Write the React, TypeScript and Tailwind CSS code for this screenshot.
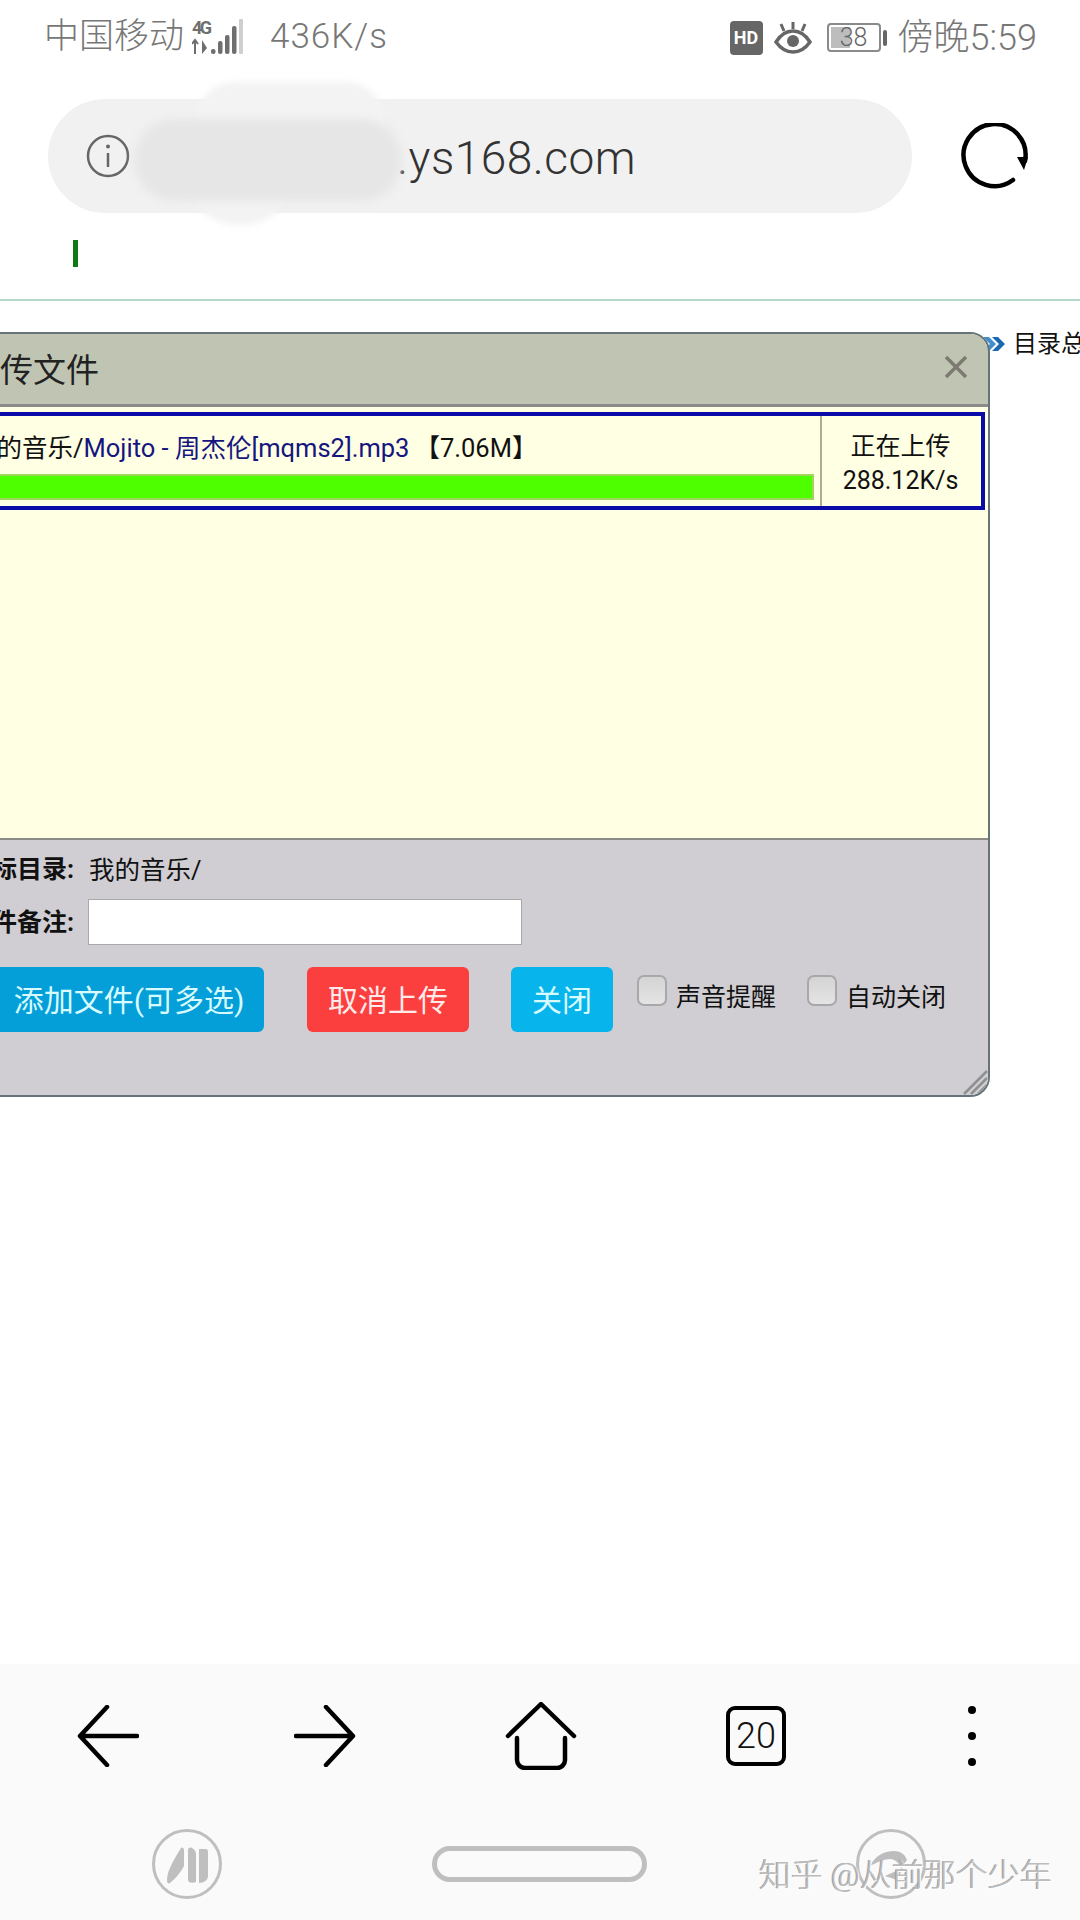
import React from "react";

function SignalIcon() {
  return (
    <svg width="54" height="38" viewBox="0 0 54 38" className="text-[#6f6f6f]">
      <text x="0" y="15" fontSize="18" fontWeight="700" fontFamily="Roboto, sans-serif" fill="currentColor" textLength="20">
        4G
      </text>
      <path d="M3 35V21M0 25l3-4 3 4" fill="none" stroke="currentColor" strokeWidth="2" />
      <path d="M10 21v14l5-6z" fill="currentColor" />
      <rect x="19" y="30" width="4.5" height="5" rx="2" fill="currentColor" />
      <rect x="26" y="22" width="4.5" height="13" rx="2" fill="currentColor" />
      <rect x="33" y="16" width="4.5" height="19" rx="2" fill="currentColor" />
      <rect x="40" y="7" width="4.5" height="28" rx="2" fill="currentColor" />
      <rect x="47" y="0" width="4" height="35" rx="1" fill="#cfcfcf" />
    </svg>
  );
}

function StatusBar() {
  return (
    <div className="h-[74px] pt-[1px] flex items-center justify-between pl-[44px] pr-[43px] text-[#777777] text-[35px] font-light">
      <div className="flex items-center">
        <span>中国移动</span>
        <span className="ml-[8px]">
          <SignalIcon />
        </span>
        <span className="ml-[24px] tracking-[1px]">436K/s</span>
      </div>
      <div className="flex items-center">
        <div className="w-[33px] h-[34px] rounded-[4px] bg-[#666666] text-white text-[18px] font-bold flex items-center justify-center">
          HD
        </div>
        <svg width="38" height="34" viewBox="0 0 38 34" className="ml-[11px]">
          <path d="M2 21c5-8 10-11 17-11s12 3 17 11c-5 7-10 10-17 10S7 28 2 21z" fill="none" stroke="#666666" strokeWidth="3.5" />
          <circle cx="19" cy="20" r="6" fill="#666666" />
          <path d="M19 1v7M7 3l3 7M31 3l-3 7" stroke="#666666" strokeWidth="3" />
        </svg>
        <div className="ml-[15px] flex items-center">
          <div className="relative w-[54px] h-[29px] rounded-[4px] border-2 border-[#8a8a8a] flex items-center justify-center text-[25px] leading-none text-[#666666] overflow-hidden">
            <div className="absolute left-[2px] top-[2px] bottom-[2px] w-[19px] bg-[#bdbdbd]"></div>
            <span className="relative">38</span>
          </div>
          <div className="ml-[2px] w-[4px] h-[16px] rounded-[2px] bg-[#666666]"></div>
        </div>
        <span className="ml-[11px] text-[36px]">傍晚5:59</span>
      </div>
    </div>
  );
}

function UrlRow() {
  return (
    <div className="mt-[25px] h-[114px] pl-[48px] flex items-center relative">
      <div className="relative w-[864px] h-[114px] rounded-full bg-[#f1f1f1] flex items-center">
        <svg width="44" height="44" viewBox="0 0 44 44" className="ml-[38px]">
          <circle cx="22" cy="22" r="20" fill="none" stroke="#666666" strokeWidth="2.5" />
          <circle cx="22" cy="12.5" r="2" fill="#666666" />
          <path d="M22 19v14" stroke="#666666" strokeWidth="2.5" />
        </svg>
        <span className="ml-[267px] mt-[5px] text-[46px] font-light tracking-[0.5px] text-[#333333]">.ys168.com</span>
      </div>
      {/* smudge over the address */}
      <div className="absolute left-[195px] top-[-17px] w-[190px] h-[80px] rounded-full bg-[#f3f3f3] blur-[3px]"></div>
      <div className="absolute left-[185px] top-[20px] w-[110px] h-[106px] rounded-full bg-[#f3f3f3] blur-[3px]"></div>
      <div className="absolute left-[134px] top-[20px] w-[268px] h-[82px] rounded-[41px] bg-[#e6e6e6] blur-[4px]"></div>
      <svg width="72" height="72" viewBox="0 0 72 72" className="ml-[47px] mt-[6px]">
        <path d="M54 57A31 31 0 1 1 66 38" fill="none" stroke="#000000" strokeWidth="4.5" strokeLinecap="round" />
        <path d="M58 34h11l-4 13z" fill="#000000" />
      </svg>
    </div>
  );
}

function UploadDialog() {
  return (
    <div className="relative z-10 shrink-0 ml-[-60px] w-[1050px] h-[765px] flex flex-col rounded-tr-[20px] rounded-br-[20px] border-2 border-[#66747a] overflow-hidden text-[25px] text-[#111111]">
      <div className="relative h-[73px] shrink-0 bg-[#c0c5b3] border-b-[3px] border-[#8b8b8b] flex items-center pl-[25px] pt-[3px] text-[33px] text-[#222222]">
        上传文件
        <svg width="24" height="24" viewBox="0 0 24 24" className="absolute right-[20px] top-[21px]">
          <path d="M2 2l20 20M22 2L2 22" stroke="#7d7a72" strokeWidth="3.5" />
        </svg>
      </div>
      <div className="h-[431px] shrink-0 bg-[#ffffe4] pt-[5px] pl-[4px] pr-[3px]">
        <div className="h-[98px] flex border-[4px] border-[#0a0aa8]">
          <div className="flex-1 pl-[21px] pr-[6px] flex flex-col">
            <div className="h-[58px] pt-[6px] flex items-center whitespace-nowrap text-[25.5px]">
              <span>我的音乐/</span>
              <span className="text-[#15157f]">Mojito - 周杰伦[mqms2].mp3</span>
              <span className="ml-[5px]">【7.06M】</span>
            </div>
            <div className="h-[26px] bg-[#4eff00] border-2 border-[#a3d45e]"></div>
          </div>
          <div className="w-[161px] shrink-0 border-l-2 border-[#adad92] pt-[5px] pr-[2px] flex flex-col items-center justify-center leading-[34px] text-[25px]">
            <span>正在上传</span>
            <span>288.12K/s</span>
          </div>
        </div>
      </div>
      <div className="flex-1 bg-[#d0ced2] border-t-2 border-[#8b8b86] relative">
        <div className="mt-[15px] flex items-center h-[30px]">
          <span className="w-[132px] text-right font-bold">目标目录:</span>
          <span className="ml-[15px] text-[25.5px]">我的音乐/</span>
        </div>
        <div className="mt-[14px] flex items-center h-[46px]">
          <span className="w-[132px] text-right font-bold pt-[2px]">文件备注:</span>
          <div className="ml-[14px] w-[434px] h-[46px] bg-white border border-[#a9a9a9]"></div>
        </div>
        <div className="mt-[22px] flex items-start">
          <button className="ml-[28px] w-[294px] h-[65px] pt-[2px] pl-[24px] rounded-[6px] bg-[#049fd9] text-[#d8fbff] text-[30px] whitespace-nowrap">
            添加文件(可多选)
          </button>
          <button className="ml-[43px] w-[162px] h-[65px] pt-[2px] rounded-[6px] bg-[#fb3f3f] text-[#ffeaea] text-[30px]">
            取消上传
          </button>
          <button className="ml-[42px] w-[102px] h-[65px] pt-[2px] rounded-[6px] bg-[#08b4ec] text-[#d8fbff] text-[30px]">
            关闭
          </button>
          <div className="ml-[24px] mt-[8px] w-[30px] h-[31px] rounded-[7px] border-2 border-[#a8a8a8] bg-linear-to-b from-[#d4d4d4] to-[#e4e4e4]"></div>
          <span className="ml-[9px] mt-[15px] text-[25px] leading-[32px]">声音提醒</span>
          <div className="ml-[31px] mt-[8px] w-[30px] h-[31px] rounded-[7px] border-2 border-[#a8a8a8] bg-linear-to-b from-[#d4d4d4] to-[#e4e4e4]"></div>
          <span className="ml-[9px] mt-[15px] text-[25px] leading-[32px]">自动关闭</span>
        </div>
        <svg width="26" height="26" viewBox="0 0 26 26" className="absolute right-0 bottom-0">
          <path d="M2 25L25 2M9 25L25 9M16 25l9-9" stroke="#8f9090" strokeWidth="2.5" />
        </svg>
      </div>
    </div>
  );
}

function NavBar() {
  return (
    <div className="h-[256px] bg-[#fafafa] relative">
      <div className="h-[152px] pb-[8px] relative flex items-center">
        <svg width="62" height="62" viewBox="0 0 62 62" className="ml-[77px]">
          <path d="M60 31H3M30 2L3 31l27 29" fill="none" stroke="#000000" strokeWidth="4.5" strokeLinecap="round" strokeLinejoin="round" />
        </svg>
        <svg width="62" height="62" viewBox="0 0 62 62" className="ml-[155px]">
          <path d="M2 31h57M32 2l27 29-27 29" fill="none" stroke="#000000" strokeWidth="4.5" strokeLinecap="round" strokeLinejoin="round" />
        </svg>
        <svg width="72" height="68" viewBox="0 0 72 68" className="ml-[149px]">
          <path d="M3 34L36 2l33 32" fill="none" stroke="#000000" strokeWidth="4.5" strokeLinecap="round" strokeLinejoin="round" />
          <path d="M12 36v22a8 8 0 0 0 8 8h32a8 8 0 0 0 8-8V36" fill="none" stroke="#000000" strokeWidth="4.5" strokeLinecap="round" />
        </svg>
        <div className="ml-[149px] w-[60px] h-[60px] rounded-[9px] border-[4px] border-[#000000] flex items-center justify-center text-[36px] font-light text-[#111111]">
          20
        </div>
        <div className="ml-[182px] flex flex-col gap-[18px]">
          <div className="w-[8px] h-[8px] rounded-full bg-black"></div>
          <div className="w-[8px] h-[8px] rounded-full bg-black"></div>
          <div className="w-[8px] h-[8px] rounded-full bg-black"></div>
        </div>
      </div>
      <div className="h-[104px] flex items-start">
        <svg width="72" height="72" viewBox="0 0 72 72" className="ml-[151px] mt-[12px]">
          <circle cx="36" cy="36" r="33.5" fill="none" stroke="#bfbfbf" strokeWidth="3" />
          <path d="M30 20c1-1 3 0 3 2v16c-3 6-9 13-14 17-1 1-3 0-3-2 0-5 1-9 3-13 3-7 7-14 11-20z" fill="#bfbfbf" />
          <path d="M37 22c0-2 2-3 4-2 2 1 4 3 4 6v28c-2 1-5 1-7 0-1-1-1-2-1-3z" fill="#bfbfbf" />
          <path d="M48 21h7c1 0 2 1 2 3v24c0 4-4 7-9 7z" fill="#bfbfbf" />
        </svg>
        <div className="ml-[209px] mt-[30px] w-[215px] h-[36px] rounded-full border-[5px] border-[#bfbfbf]"></div>
        <svg width="72" height="72" viewBox="0 0 72 72" className="ml-[208px] mt-[12px]">
          <circle cx="36" cy="36" r="33.5" fill="none" stroke="#bfbfbf" strokeWidth="3" />
          <path d="M15 38c5-10 14-15 24-15 6 0 11 3 13 9l-6 8c-2-5-6-9-11-9-6 0-12 3-20 7z" fill="#bdbdbd" />
          <path d="M30 48l18-8-6 12z" fill="#bdbdbd" />
        </svg>
      </div>
      {/* zhihu watermark */}
      <div className="absolute left-[759px] top-[193px] text-[32px] leading-[36px] font-light whitespace-nowrap text-[#bcbcbc] [text-shadow:1px_1px_0_#ffffff,-1px_0_0_#9f9f9f]">
        知乎 @从前那个少年
      </div>
    </div>
  );
}

export default function App() {
  return (
    <div className="relative w-[1080px] h-[1920px] flex flex-col overflow-hidden bg-white font-[Roboto,'Noto_Sans_CJK_SC',sans-serif]">
      <StatusBar />
      <UrlRow />
      <div className="mt-[27px] ml-[73px] w-[5px] h-[27px] bg-[#0f7a0f]"></div>
      <div className="mt-[32px] h-[2px] bg-[#b5d8c8]"></div>
      <div className="mt-[31px] flex items-start">
        <UploadDialog />
        <div className="flex items-center -ml-[9px] h-[24px] whitespace-nowrap">
          <svg width="26" height="20" viewBox="0 0 26 20" className="shrink-0">
            <path d="M2 3l7 7-7 7h6l7-7-7-7z" fill="#3f8fd0" />
            <path d="M11 3l7 7-7 7h6l7-7-7-7z" fill="#1b68b0" />
          </svg>
          <span className="ml-[6px] text-[24px] text-[#111111]">目录总览</span>
        </div>
      </div>
      <div className="flex-1"></div>
      <NavBar />
    </div>
  );
}
